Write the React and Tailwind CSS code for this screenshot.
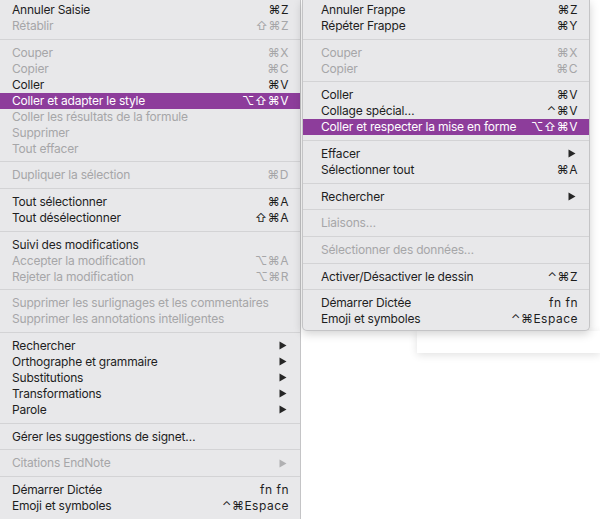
import React from "react";

const LEFT = [
  { t: "Annuler Saisie", k: "⌘Z" },
  { t: "Rétablir", k: "⇧⌘Z", d: 1 },
  "sep",
  { t: "Couper", k: "⌘X", d: 1 },
  { t: "Copier", k: "⌘C", d: 1 },
  { t: "Coller", k: "⌘V" },
  { t: "Coller et adapter le style", k: "⌥⇧⌘V", h: 1 },
  { t: "Coller les résultats de la formule", d: 1 },
  { t: "Supprimer", d: 1 },
  { t: "Tout effacer", d: 1 },
  "sep",
  { t: "Dupliquer la sélection", k: "⌘D", d: 1 },
  "sep",
  { t: "Tout sélectionner", k: "⌘A" },
  { t: "Tout désélectionner", k: "⇧⌘A" },
  "sep",
  { t: "Suivi des modifications" },
  { t: "Accepter la modification", k: "⌥⌘A", d: 1 },
  { t: "Rejeter la modification", k: "⌥⌘R", d: 1 },
  "sep",
  { t: "Supprimer les surlignages et les commentaires", d: 1 },
  { t: "Supprimer les annotations intelligentes", d: 1 },
  "sep",
  { t: "Rechercher", a: 1 },
  { t: "Orthographe et grammaire", a: 1 },
  { t: "Substitutions", a: 1 },
  { t: "Transformations", a: 1 },
  { t: "Parole", a: 1 },
  "sep",
  { t: "Gérer les suggestions de signet…" },
  "sep",
  { t: "Citations EndNote", a: 1, d: 1 },
  "sep",
  { t: "Démarrer Dictée", k: "fn fn" },
  { t: "Emoji et symboles", k: "⌃⌘Espace" },
];

const RIGHT = [
  { t: "Annuler Frappe", k: "⌘Z" },
  { t: "Répéter Frappe", k: "⌘Y" },
  "sep",
  { t: "Couper", k: "⌘X", d: 1 },
  { t: "Copier", k: "⌘C", d: 1 },
  "sep",
  { t: "Coller", k: "⌘V" },
  { t: "Collage spécial…", k: "⌃⌘V" },
  { t: "Coller et respecter la mise en forme", k: "⌥⇧⌘V", h: 1 },
  "sep",
  { t: "Effacer", a: 1 },
  { t: "Sélectionner tout", k: "⌘A" },
  "sep",
  { t: "Rechercher", a: 1 },
  "sep",
  { t: "Liaisons…", d: 1 },
  "sep",
  { t: "Sélectionner des données…", d: 1 },
  "sep",
  { t: "Activer/Désactiver le dessin", k: "⌃⌘Z" },
  "sep",
  { t: "Démarrer Dictée", k: "fn fn" },
  { t: "Emoji et symboles", k: "⌃⌘Espace" },
];

function Arrow({ color }) {
  return (
    <svg width="8" height="9" viewBox="0 0 8 9" className="mr-[2px]">
      <path d="M0.5 0.5 L7.5 4.5 L0.5 8.5 Z" fill={color} />
    </svg>
  );
}

function Menu({ items, padL, padR }) {
  return items.map((it, i) => {
    if (it === "sep")
      return (
        <div key={i} className="h-[10.67px] flex items-center">
          <div className="h-px w-full bg-[#d3d3d5]" />
        </div>
      );
    const color = it.h ? "text-white" : it.d ? "text-[#a6a6a8]" : "text-[#1e1e1e]";
    return (
      <div
        key={i}
        className={`h-[16px] flex items-center justify-between ${padL} ${padR} ${color} ${
          it.h ? "bg-[#8d3d9b]" : ""
        }`}
      >
        <span className="whitespace-nowrap tracking-[-0.2px]">{it.t}</span>
        {it.k && <span className="whitespace-nowrap tracking-[0.5px]">{it.k}</span>}
        {it.a && <Arrow color={it.d ? "#b0b0b2" : "#262626"} />}
      </div>
    );
  });
}

export default function App() {
  return (
    <div
      className="flex w-[600px] h-[519px] overflow-hidden bg-white text-[12px] leading-none"
      style={{ fontFamily: "Inter, 'DejaVu Sans', sans-serif" }}
    >
      <div className="w-[301px] shrink-0 h-[519px] bg-[#e8e8ea] border-r border-[#c4c4c6] pt-[2px]">
        <Menu items={LEFT} padL="pl-3" padR="pr-[11px]" />
      </div>
      <div className="flex flex-col flex-1 pl-[1px]">
        <div className="w-[288px] bg-[#e8e8ea] border border-t-0 border-[#c4c4c6] rounded-b-[5px] pt-[2px] pb-[3px] shadow-[0_3px_10px_rgba(0,0,0,0.18)] relative z-10">
          <Menu items={RIGHT} padL="pl-[18px]" padR="pr-[11px]" />
        </div>
        <div className="ml-[115px] h-[22px] bg-white shadow-[0_2px_8px_rgba(0,0,0,0.12)]" />
      </div>
    </div>
  );
}
